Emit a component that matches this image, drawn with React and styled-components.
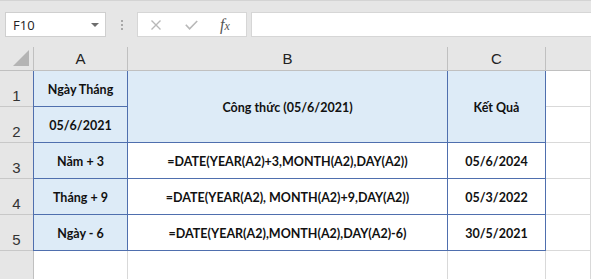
import React from "react";
import styled, { createGlobalStyle } from "styled-components";

const Global = createGlobalStyle`
  html, body { margin: 0; padding: 0; background: #ffffff; }
  body { width: 591px; height: 279px; overflow: hidden; }
`;

const Page = styled.div`
  width: 591px;
  height: 279px;
  display: flex;
  flex-direction: column;
  background: #e6e6e6;
  font-family: "Open Sans", "Noto Sans", sans-serif;
  overflow: hidden;
`;

const Toolbar = styled.div`
  height: 47px;
  flex-shrink: 0;
  box-sizing: border-box;
  border-top: 1px solid #d4d4d4;
  display: flex;
  align-items: flex-start;
  padding: 11px 0 0 5px;
`;

const NameBox = styled.div`
  width: 101px;
  height: 25px;
  box-sizing: border-box;
  background: #fff;
  border: 1px solid #cfcfcf;
  display: flex;
  align-items: center;
  justify-content: space-between;
  padding: 0 6px 0 7px;
  font-size: 13px;
  color: #222;
`;

const Caret = styled.span`
  width: 0;
  height: 0;
  border-left: 4px solid transparent;
  border-right: 4px solid transparent;
  border-top: 4px solid #6d6d6d;
`;

const Grip = styled.div`
  width: 31px;
  height: 25px;
  display: flex;
  flex-direction: column;
  align-items: center;
  justify-content: center;
  gap: 2px;
  span {
    width: 2px;
    height: 2px;
    background: #a8a8a8;
  }
`;

const FxButtons = styled.div`
  width: 110px;
  height: 25px;
  box-sizing: border-box;
  background: #fff;
  border: 1px solid #d6d6d6;
  display: flex;
  align-items: center;
  padding: 0 0 0 13px;
`;

const FxSlot = styled.span`
  display: flex;
  align-items: center;
  justify-content: center;
  margin-right: ${(p) => p.$gap || 0}px;
`;

const FxLabel = styled.span`
  font-family: "Liberation Serif", "DejaVu Serif", serif;
  font-style: italic;
  font-size: 16px;
  color: #555;
  span { font-size: 12px; }
`;

const FormulaInput = styled.div`
  flex: 1;
  height: 25px;
  margin-left: 4px;
  box-sizing: border-box;
  background: #fff;
  border: 1px solid #d6d6d6;
  border-right: none;
`;

const Sheet = styled.div`
  flex: 1;
  display: grid;
  grid-template-columns: 34px 94px 320px 98px 1fr;
  grid-template-rows: 24px repeat(6, 36px);
  background: #fff;
`;

const ColHead = styled.div`
  box-sizing: border-box;
  background: #e6e6e6;
  border-right: 1px solid ${(p) => (p.$last ? "transparent" : "#c0c0c0")};
  border-bottom: 1px solid #c0c0c0;
  display: flex;
  align-items: center;
  justify-content: center;
  font-family: "Liberation Sans", "Open Sans", sans-serif;
  font-size: 15px;
  color: #222;
  position: relative;
`;

const CornerMark = styled.div`
  position: absolute;
  right: 4px;
  bottom: 4px;
  width: 0;
  height: 0;
  border-left: 16px solid transparent;
  border-bottom: 16px solid #b4b4b4;
`;

const RowHead = styled.div`
  box-sizing: border-box;
  background: #e6e6e6;
  border-right: 1px solid #c0c0c0;
  border-bottom: 1px solid #c8c8c8;
  display: flex;
  align-items: flex-end;
  justify-content: center;
  padding-bottom: 2px;
  font-family: "Liberation Sans", "Open Sans", sans-serif;
  font-size: 15px;
  color: #333;
`;

const BLUE = "#4f6fae";

const Cell = styled.div`
  box-sizing: border-box;
  grid-row: ${(p) => (p.$span ? `span ${p.$span}` : "auto")};
  background: ${(p) => (p.$fill ? "#ddebf7" : "#fff")};
  border-right: 1px solid ${(p) => (p.$table ? BLUE : "#d9d9d9")};
  border-bottom: 1px solid ${(p) => (p.$table ? BLUE : "#d9d9d9")};
  box-shadow: ${(p) =>
    [p.$edgeLeft && `-1px 0 0 ${BLUE}`, p.$edgeTop && `0 -1px 0 ${BLUE}`]
      .filter(Boolean)
      .join(", ") || "none"};
  display: flex;
  align-items: center;
  justify-content: center;
  font-family: "Lato", "Open Sans", sans-serif;
  font-weight: 700;
  font-size: 12.5px;
  color: #111;
  white-space: nowrap;
  padding-top: 1px;
`;

const rows = [
  { n: 3, a: "Năm + 3", b: "=DATE(YEAR(A2)+3,MONTH(A2),DAY(A2))", c: "05/6/2024" },
  { n: 4, a: "Tháng + 9", b: "=DATE(YEAR(A2), MONTH(A2)+9,DAY(A2))", c: "05/3/2022" },
  { n: 5, a: "Ngày - 6", b: "=DATE(YEAR(A2),MONTH(A2),DAY(A2)-6)", c: "30/5/2021" },
];

const XIcon = () => (
  <svg width="10" height="10" viewBox="0 0 10 10">
    <path d="M0.5 0.5 L9.5 9.5 M9.5 0.5 L0.5 9.5" stroke="#b8b8b8" strokeWidth="1.4" fill="none" />
  </svg>
);

const CheckIcon = () => (
  <svg width="13" height="10" viewBox="0 0 13 10">
    <path d="M0.8 4.8 L4.6 8.8 L12.2 1" stroke="#b8b8b8" strokeWidth="1.6" fill="none" />
  </svg>
);

export default function App() {
  return (
    <>
      <Global />
      <Page>
        <Toolbar>
          <NameBox>
            F10
            <Caret />
          </NameBox>
          <Grip>
            <span />
            <span />
            <span />
          </Grip>
          <FxButtons>
            <FxSlot $gap={24}>
              <XIcon />
            </FxSlot>
            <FxSlot $gap={22}>
              <CheckIcon />
            </FxSlot>
            <FxSlot>
              <FxLabel>
                f<span>x</span>
              </FxLabel>
            </FxSlot>
          </FxButtons>
          <FormulaInput />
        </Toolbar>
        <Sheet>
          <ColHead>
            <CornerMark />
          </ColHead>
          <ColHead>A</ColHead>
          <ColHead>B</ColHead>
          <ColHead>C</ColHead>
          <ColHead $last />

          <RowHead>1</RowHead>
          <Cell $table $fill $edgeLeft $edgeTop>Ngày Tháng</Cell>
          <Cell $table $fill $edgeTop $span={2}>Công thức (05/6/2021)</Cell>
          <Cell $table $fill $edgeTop $span={2}>Kết Quả</Cell>
          <Cell />

          <RowHead>2</RowHead>
          <Cell $table $fill $edgeLeft>05/6/2021</Cell>
          <Cell />

          {rows.map((r) => (
            <React.Fragment key={r.n}>
              <RowHead>{r.n}</RowHead>
              <Cell $table $fill $edgeLeft>{r.a}</Cell>
              <Cell $table>{r.b}</Cell>
              <Cell $table>{r.c}</Cell>
              <Cell />
            </React.Fragment>
          ))}

          {/* row 6 runs past the window's bottom edge, so its number is out of view */}
          <RowHead />
          <Cell />
          <Cell />
          <Cell />
          <Cell />
        </Sheet>
      </Page>
    </>
  );
}
